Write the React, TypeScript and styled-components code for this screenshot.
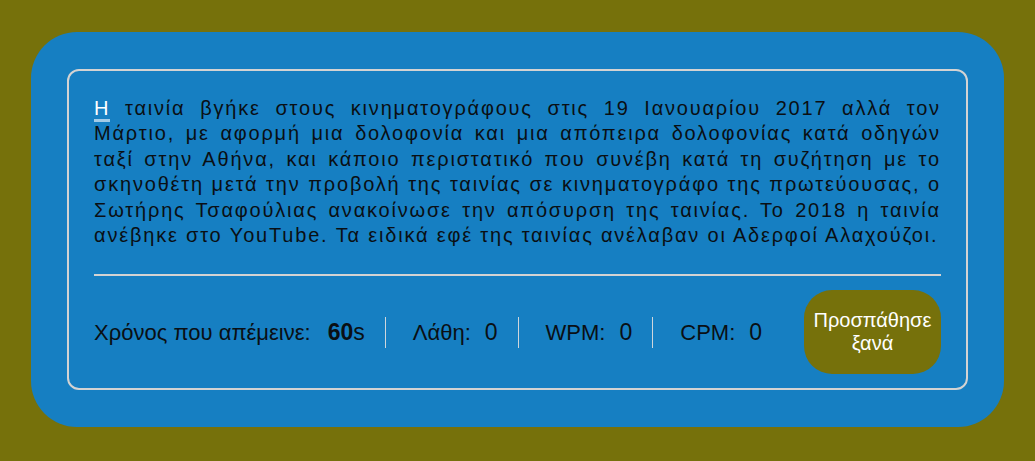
import React from "react";
import styled, { createGlobalStyle } from "styled-components";

const Global = createGlobalStyle`
  html, body {
    margin: 0;
    padding: 0;
    background: #76710b;
    font-family: "Liberation Sans", Arial, sans-serif;
  }
`;

const Page = styled.div`
  padding: 32px 0 33px;
`;

const Card = styled.main`
  width: 94%;
  margin: 0 auto;
  box-sizing: border-box;
  background: #167fc2;
  border-radius: 46px;
  padding: 37px 36px;
`;

const Panel = styled.section`
  border: 2px solid #d3d3d3;
  border-radius: 12px;
  padding: 25px 25px 14px;
`;

const Quote = styled.p`
  margin: 0;
  font-size: 20px;
  line-height: 25.4px;
  letter-spacing: 1.8px;
  text-align: justify;
  color: #0a0f14;
`;

const Current = styled.span`
  color: #ffffff;
  border-bottom: 3px solid #a3cbe7;
`;

const Divider = styled.hr`
  border: none;
  height: 2px;
  background: #d3d3d3;
  margin: 26px 0 14px;
`;

const Footer = styled.div`
  display: flex;
  align-items: center;
  justify-content: space-between;
`;

const Stats = styled.ul`
  display: flex;
  align-items: center;
  list-style: none;
  margin: 0;
  padding: 0;
`;

const Stat = styled.li<{ $first?: boolean }>`
  display: flex;
  align-items: baseline;
  gap: ${(p) => (p.$first ? "17px" : "14px")};
  font-size: 22px;
  color: #0a0f14;
  padding: 0 20px 0 ${(p) => (p.$first ? "0" : "27px")};
  height: 31px;
  line-height: 31px;
  border-left: ${(p) => (p.$first ? "none" : "1px solid #cfd6dc")};
`;

const Value = styled.span<{ $bold?: boolean }>`
  font-size: 23px;
  font-weight: ${(p) => (p.$bold ? 700 : 400)};
`;

const Unit = styled.span`
  font-weight: 400;
`;

const Retry = styled.button`
  width: 137px;
  height: 84px;
  border: none;
  border-radius: 28px;
  background: #76710b;
  color: #ffffff;
  font-family: "Liberation Sans", Arial, sans-serif;
  font-size: 20px;
  line-height: 23px;
  padding: 0 8px;
  cursor: pointer;
`;

const text =
  " ταινία βγήκε στους κινηματογράφους στις 19 Ιανουαρίου 2017 αλλά τον Μάρτιο, με αφορμή μια δολοφονία και μια απόπειρα δολοφονίας κατά οδηγών ταξί στην Αθήνα, και κάποιο περιστατικό που συνέβη κατά τη συζήτηση με το σκηνοθέτη μετά την προβολή της ταινίας σε κινηματογράφο της πρωτεύουσας, ο Σωτήρης Τσαφούλιας ανακοίνωσε την απόσυρση της ταινίας. Το 2018 η ταινία ανέβηκε στο YouTube. Τα ειδικά εφέ της ταινίας ανέλαβαν οι Αδερφοί Αλαχούζοι.";

export default function App() {
  return (
    <Page>
      <Global />
      <Card>
        <Panel>
          <Quote>
            <Current>Η</Current>
            {text}
          </Quote>
          <Divider />
          <Footer>
            <Stats>
              <Stat $first>
                <span>Χρόνος που απέμεινε:</span>
                <Value>
                  <Value $bold>60</Value>
                  <Unit>s</Unit>
                </Value>
              </Stat>
              <Stat>
                <span>Λάθη:</span>
                <Value>0</Value>
              </Stat>
              <Stat>
                <span>WPM:</span>
                <Value>0</Value>
              </Stat>
              <Stat>
                <span>CPM:</span>
                <Value>0</Value>
              </Stat>
            </Stats>
            <Retry>Προσπάθησε ξανά</Retry>
          </Footer>
        </Panel>
      </Card>
    </Page>
  );
}
